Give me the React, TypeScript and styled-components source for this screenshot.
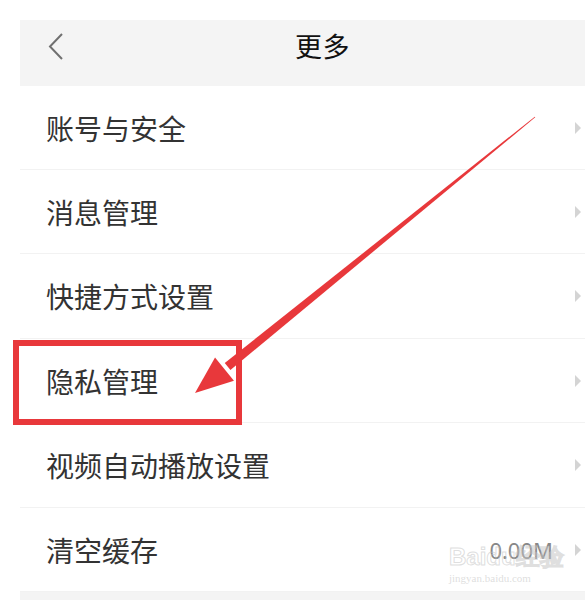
import React from "react";
import styled, { createGlobalStyle } from "styled-components";

const Global = createGlobalStyle`
  html, body { margin: 0; padding: 0; background: #ffffff; }
  body { font-family: "Noto Sans CJK SC", "Noto Sans", sans-serif; }
`;

const Page = styled.div`
  position: relative;
  width: 585px;
  height: 600px;
  overflow: hidden;
  padding: 20px 0 0 20px;
  box-sizing: border-box;
  background: #ffffff;
`;

const Header = styled.div`
  height: 66px;
  box-sizing: border-box;
  padding-bottom: 14px;
  background: #f4f4f4;
  display: grid;
  grid-template-columns: 60px 1fr 60px;
  align-items: center;
`;

const BackButton = styled.div`
  display: flex;
  align-items: center;
  padding-left: 28px;
  color: #777;
`;

const Title = styled.div`
  text-align: center;
  font-size: 27px;
  line-height: 32px;
  color: #111;
  padding-left: 40px;
  letter-spacing: 0.5px;
`;

const List = styled.div`
  display: flex;
  flex-direction: column;
`;

const Row = styled.div<{ $h: number }>`
  height: ${(p) => p.$h}px;
  box-sizing: border-box;
  border-bottom: 1px solid #f2f2f2;
  display: flex;
  align-items: center;
  padding: 0 4px 0 26px;
`;

const Label = styled.span`
  flex: 1;
  font-size: 28px;
  color: #333;
`;

const Value = styled.span`
  font-family: "Noto Sans", "Liberation Sans", sans-serif;
  font-size: 22px;
  color: #888;
  margin-right: 22px;
`;

const Chevron = styled.span`
  width: 0;
  height: 0;
  border-top: 6px solid transparent;
  border-bottom: 6px solid transparent;
  border-left: 6px solid #d4d4d4;
`;

const BottomBand = styled.div`
  height: 20px;
  background: #f4f4f4;
`;

const Overlay = styled.svg`
  position: absolute;
  left: 0;
  top: 0;
  pointer-events: none;
`;

const Watermark = styled.div`
  position: absolute;
  left: 449px;
  top: 544px;
  display: flex;
  flex-direction: column;
  align-items: flex-start;
  pointer-events: none;
`;

const WmBig = styled.span`
  font-family: "Liberation Sans", sans-serif;
  font-weight: bold;
  font-size: 24px;
  line-height: 26px;
  color: transparent;
  -webkit-text-stroke: 1px rgba(195, 195, 195, 0.55);
`;

const WmSmall = styled.span`
  font-family: "Liberation Serif", serif;
  font-size: 11px;
  line-height: 13px;
  margin-top: 2px;
  color: rgba(195, 195, 195, 0.55);
`;

const rows = [
  { label: "账号与安全", h: 84 },
  { label: "消息管理", h: 84 },
  { label: "快捷方式设置", h: 85 },
  { label: "隐私管理", h: 84 },
  { label: "视频自动播放设置", h: 85 },
  { label: "清空缓存", h: 84, value: "0.00M" },
];

function Arrow() {
  const T = { x: 535, y: 117 };
  const P = { x: 195, y: 393 };
  const dx = T.x - P.x;
  const dy = T.y - P.y;
  const len = Math.hypot(dx, dy);
  const ux = dx / len;
  const uy = dy / len;
  const nx = -uy;
  const ny = ux;
  const headLen = 38;
  const headHalf = 15;
  const B = { x: P.x + ux * headLen, y: P.y + uy * headLen };
  const shaftHalf = 4.5;
  const shaft = [
    [T.x + nx * 0.4, T.y + ny * 0.4],
    [B.x + ux * 4 + nx * shaftHalf, B.y + uy * 4 + ny * shaftHalf],
    [B.x + ux * 4 - nx * shaftHalf, B.y + uy * 4 - ny * shaftHalf],
    [T.x - nx * 0.4, T.y - ny * 0.4],
  ]
    .map((p) => p.join(","))
    .join(" ");
  const head = [
    [P.x, P.y],
    [B.x + nx * headHalf, B.y + ny * headHalf],
    [B.x - nx * headHalf, B.y - ny * headHalf],
  ]
    .map((p) => p.join(","))
    .join(" ");
  return (
    <>
      <polygon points={shaft} fill="#e8383b" />
      <polygon points={head} fill="#e8383b" />
    </>
  );
}

export default function App() {
  return (
    <>
      <Global />
      <Page>
        <Header>
          <BackButton>
            <svg width="16" height="27" viewBox="0 0 16 27">
              <polyline points="14,1 2,13.5 14,26" fill="none" stroke="#707070" strokeWidth="2" />
            </svg>
          </BackButton>
          <Title>更多</Title>
          <span />
        </Header>
        <List>
          {rows.map((r) => (
            <Row key={r.label} $h={r.h}>
              <Label>{r.label}</Label>
              {r.value && <Value>{r.value}</Value>}
              <Chevron />
            </Row>
          ))}
        </List>
        <BottomBand />
        <Watermark>
          <WmBig>Baidu经验</WmBig>
          <WmSmall>jingyan.baidu.com</WmSmall>
        </Watermark>
        <Overlay width="585" height="600" viewBox="0 0 585 600">
          <rect x="16" y="343" width="223" height="79" fill="none" stroke="#e8383b" strokeWidth="6" />
          <Arrow />
        </Overlay>
      </Page>
    </>
  );
}
